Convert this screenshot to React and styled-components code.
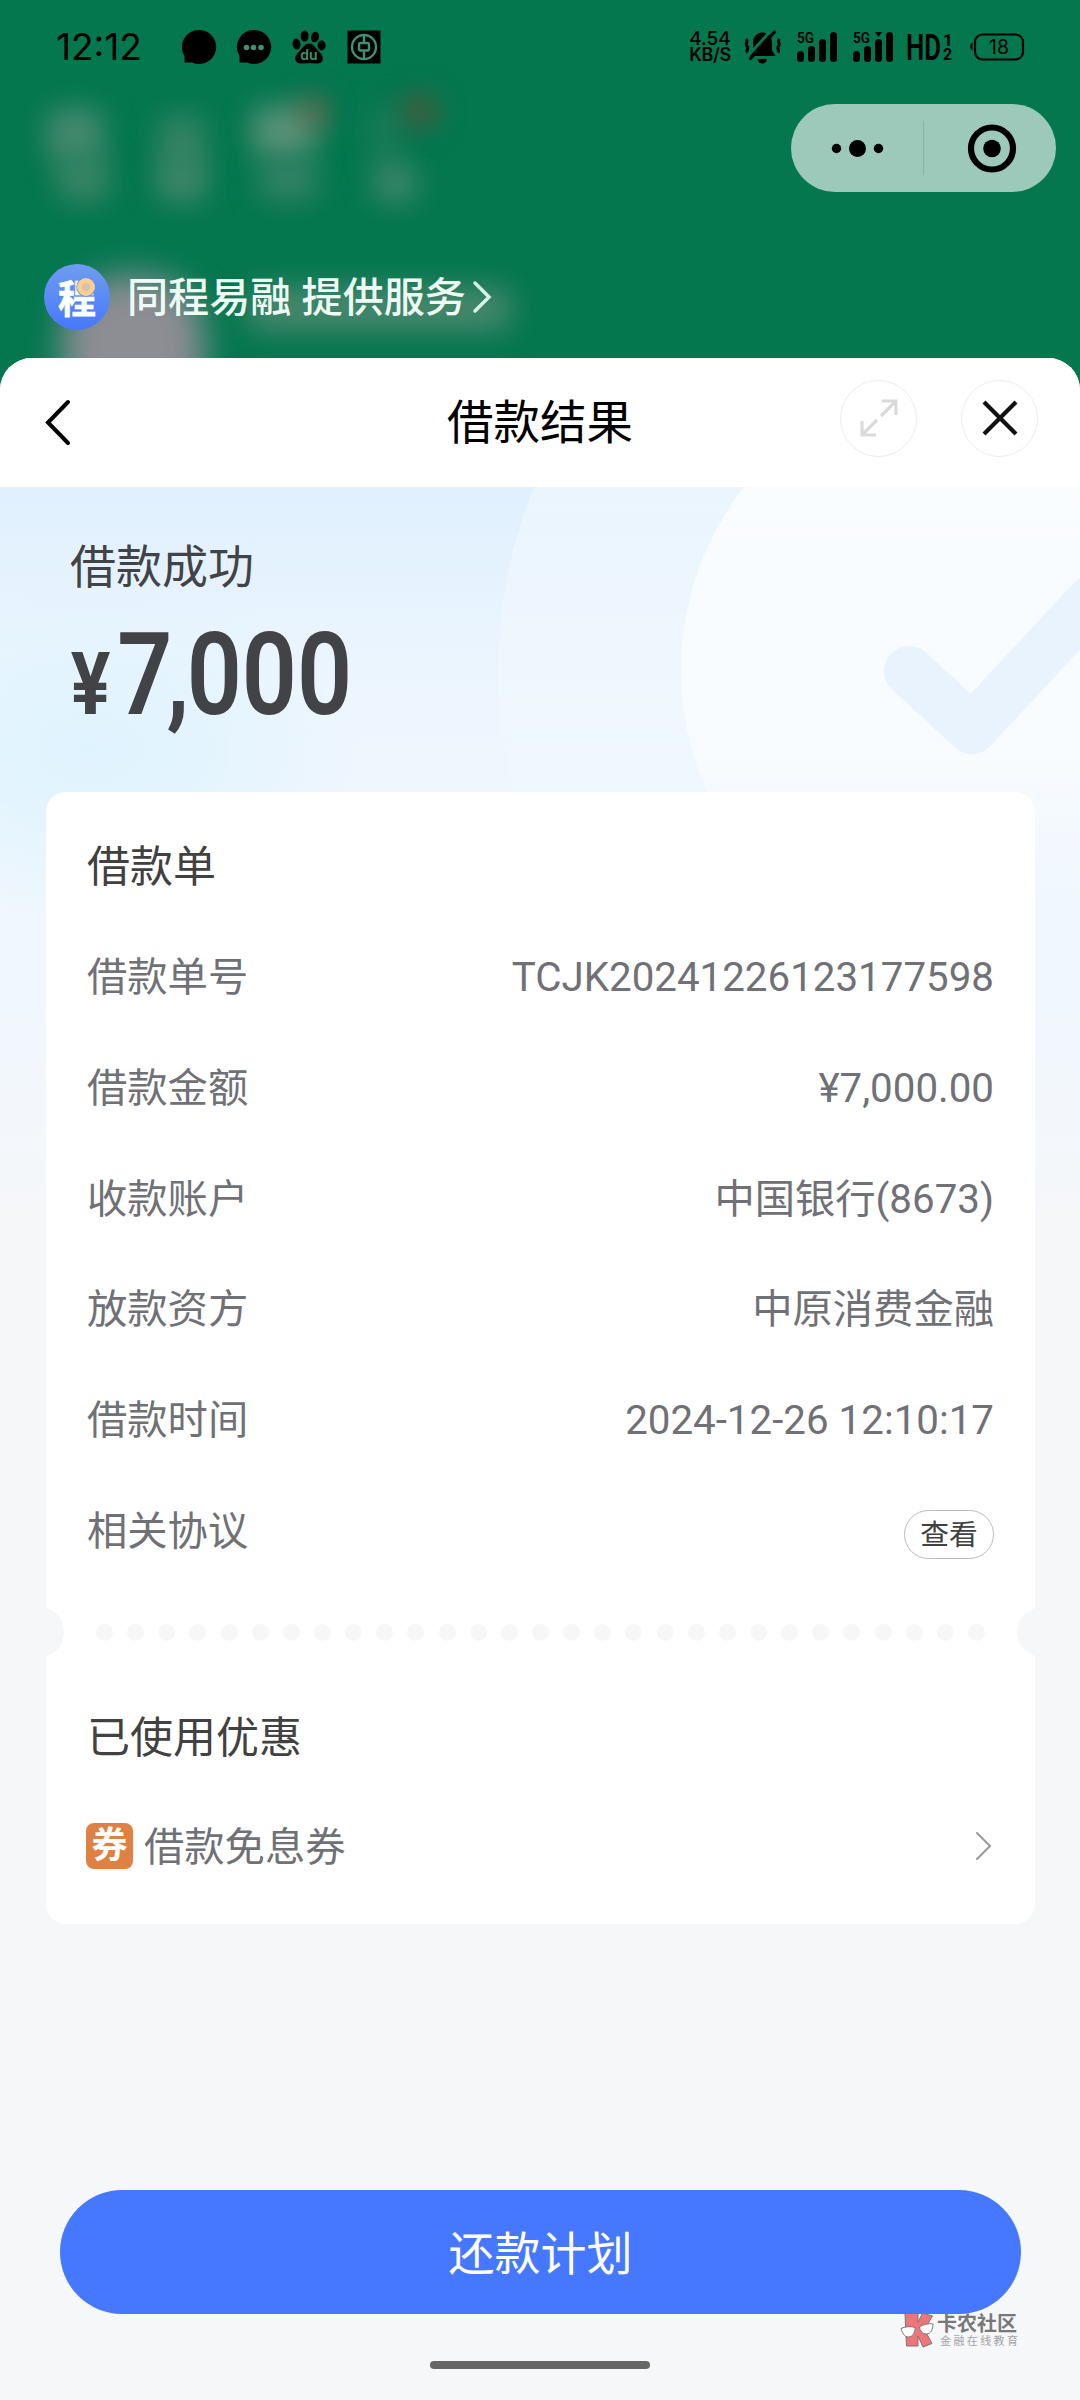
import React from 'react'
import styled, { createGlobalStyle } from 'styled-components'

const GlobalStyle = createGlobalStyle`
    * { box-sizing: border-box; }
    body {
        margin: 0;
        background: #f5f7f9;
        font-family: Roboto, "Noto Sans CJK SC", sans-serif;
    }
    svg {
        flex-shrink: 0;
        overflow: visible;
    }
`

const green = '#04774f'
const pageGrey = '#f5f7f9'

const Screen = styled.div`
    position: relative;
    display: flex;
    flex-direction: column;
    width: 1080px;
    height: 2400px;
    overflow: hidden;
    background: ${green};
`

const Smudge = styled.div`
    position: absolute;
    left: ${({ $x }) => $x}px;
    top: ${({ $y }) => $y}px;
    width: ${({ $w }) => $w}px;
    height: ${({ $h }) => $h}px;
    border-radius: ${({ $r }) => $r || 16}px;
    background: ${({ $color }) => $color};
    filter: blur(${({ $blur }) => $blur || 14}px);
`

const StatusBar = styled.div`
    position: relative;
    display: flex;
    justify-content: space-between;
    height: 92px;
    padding: 0 55px 0 56px;
`

const StatusGroup = styled.div`
    display: flex;
    align-items: center;
    height: 93px;
    gap: ${({ $gap }) => $gap || 0}px;
`

const Clock = styled.div`
    width: 105px;
    font-family: Inter, sans-serif;
    font-size: 37px;
    line-height: 40px;
    white-space: nowrap;
`

const Speed = styled.div`
    width: 42px;
    margin-right: -3px;
    font-family: Inter, sans-serif;
    font-size: 19px;
    font-weight: 500;
    line-height: 16px;
    text-align: center;
    white-space: nowrap;
`

const SpeedUnit = styled.div`
    font-size: 18px;
    font-weight: 600;
    letter-spacing: -0.4px;
`

const CapsuleRow = styled.div`
    position: relative;
    display: flex;
    justify-content: flex-end;
    padding: 12px 24px 0 0;
`

const Capsule = styled.div`
    display: flex;
    align-items: center;
    width: 265px;
    height: 88px;
    border-radius: 44px;
    background: #9dc9ba;
`

const Provider = styled.div`
    position: relative;
    display: flex;
    align-items: center;
    height: 66px;
    margin: 72px 0 28px 44px;
`

const ProviderName = styled.div`
    margin: 1px 7px 0 17px;
    color: #eefaf4;
    font-size: 41.1px;
    font-weight: 500;
    line-height: 60px;
    white-space: nowrap;
`

const Sheet = styled.div`
    position: relative;
    display: flex;
    flex: 1;
    flex-direction: column;
    border-radius: 32px 32px 0 0;
    overflow: hidden;
    background: ${pageGrey};
`

const SheetHeader = styled.div`
    display: grid;
    grid-template-columns: 1fr auto 1fr;
    align-items: center;
    height: 129px;
    padding: 0 42px 0 43px;
    background: #fff;
`

const Title = styled.div`
    margin-right: 1px;
    color: #000;
    font-size: 46.5px;
    line-height: 64px;
`

const HeaderActions = styled.div`
    display: flex;
    justify-content: flex-end;
    gap: 44px;
    padding-bottom: 9px;
`

const RoundButton = styled.div`
    display: flex;
    align-items: center;
    justify-content: center;
    width: 77px;
    height: 77px;
    border: 1px solid #ececec;
    border-radius: 50%;
`

const Body = styled.div`
    position: relative;
    display: flex;
    flex: 1;
    flex-direction: column;
`

const Backdrop = styled.svg`
    position: absolute;
    left: 0;
    top: 0;
    overflow: hidden;
`

const Hero = styled.div`
    position: relative;
    height: 305px;
    padding: 46px 0 0 70px;
    color: #414347;
`

const HeroLabel = styled.div`
    font-size: 46px;
    line-height: 68px;
`

const Amount = styled.div`
    display: flex;
    align-items: baseline;
    margin-top: 18px;
    font-size: 115px;
    font-weight: 600;
    line-height: 112px;
    transform: scaleX(0.84);
    transform-origin: left;
`

const Currency = styled.span`
    margin: 0 8px 0 1px;
    font-size: 88px;
    font-weight: 700;
`

const Comma = styled.span`
    margin: 0 -3px 0 -7px;
`

const Card = styled.div`
    position: relative;
    width: 989px;
    height: 1132px;
    margin-left: 46px;
    padding: 43px 41px 0 41px;
    border-radius: 20px;
    background: #fff;
`

const SectionTitle = styled.div`
    color: #414141;
    font-size: 43px;
    line-height: 64px;
`

const Rows = styled.div`
    display: flex;
    flex-direction: column;
    padding-top: 24px;
`

const Row = styled.div`
    display: flex;
    align-items: center;
    justify-content: space-between;
    height: 110.7px;
    color: #707176;
    font-size: 40.3px;
    line-height: 60px;
`

const ViewButton = styled.div`
    width: 90px;
    height: 49px;
    margin-top: 5px;
    border: 1px solid #bbb;
    border-radius: 25px;
    color: #414141;
    font-size: 28.8px;
    line-height: 49px;
    text-align: center;
`

// runs edge to edge over the card padding so the notches can bite into it
const Perforation = styled.div`
    display: flex;
    align-items: center;
    justify-content: space-between;
    height: 50px;
    margin: 20px -73px 0 -73px;
`

const Notch = styled.div`
    width: 50px;
    height: 50px;
    border-radius: 50%;
    background: ${pageGrey};
`

const Dots = styled.div`
    display: flex;
    justify-content: space-between;
    width: 889px;
`

const Dot = styled.div`
    width: 17px;
    height: 17px;
    border-radius: 50%;
    background: #f7f7f7;
`

const CouponSection = styled.div`
    padding-top: 49px;
`

const CouponRow = styled(Row)`
    height: 60px;
    margin-top: 48px;
    padding-right: 2px;

    > svg { margin-bottom: 4px; }
`

const CouponName = styled.div`
    display: flex;
    align-items: center;
    gap: 11px;
`

const CouponBadge = styled.div`
    width: 47px;
    height: 46px;
    margin: 0 0 4px -1px;
    border-radius: 8px;
    background: #df8143;
    color: #fff;
    font-size: 36px;
    font-weight: 700;
    line-height: 46px;
    text-align: center;
`

const PlanButton = styled.div`
    width: 961px;
    height: 124px;
    margin: 266px auto 0 60px;
    border-radius: 62px;
    background: #4678ff;
    color: #fff;
    font-size: 46px;
    line-height: 128px;
    text-align: center;
`

const HomeBar = styled.div`
    width: 220px;
    height: 8px;
    margin: 47px auto 0;
    border-radius: 4px;
    background: #666;
`

const Watermark = styled.div`
    position: absolute;
    left: 900px;
    top: 2312px;
    display: flex;
    gap: 3px;
`

const WatermarkText = styled.div`
    display: flex;
    flex-direction: column;
    padding-top: 1px;
    white-space: nowrap;
`

const WatermarkName = styled.div`
    color: #77787a;
    font-size: 20px;
    font-weight: 700;
    line-height: 22px;
`

const WatermarkSlogan = styled.div`
    padding-left: 3px;
    color: #a3a4a6;
    font-size: 11px;
    letter-spacing: 2.4px;
    line-height: 14px;
`

const BubbleIcon = ({ dots }) => (
    <svg width="34" height="34" viewBox="0 0 34 34">
        <path d="M17 0a17 17 0 1 1-7 32.4H2.5V26A17 17 0 0 1 17 0z" />
        {dots && [9.5, 16.5, 24].map(x => <circle key={x} cx={x} cy="17.5" r="2.8" fill="#3f9170" />)}
    </svg>
)

const PawIcon = () => (
    <svg width="34" height="34" viewBox="0 0 34 34">
        <ellipse cx="4.5" cy="14" rx="4" ry="5.6" transform="rotate(-8 4.5 14)" />
        <ellipse cx="12.6" cy="6" rx="4" ry="5.6" />
        <ellipse cx="23" cy="7" rx="4" ry="5.4" transform="rotate(12 23 7)" />
        <ellipse cx="29.6" cy="15.5" rx="4" ry="5" />
        <path d="M17 13.5c4 0 6 3.5 8.5 6.5 3 3.2 6 5.5 5.3 9.5-.7 3.5-4 4.3-7 4-4-.4-9.5-.4-13.5 0-3.5.3-6.5-.8-7-4-.6-4 2.5-6.5 5.200-9.500C11.200 17 13 13.500 17 13.500z" />
        <text x="17" y="29.5" fill="#3f9170" fontSize="14" fontWeight="600" fontFamily="Inter" textAnchor="middle">du</text>
    </svg>
)

const BankIcon = () => (
    <svg width="34" height="34" viewBox="0 0 34 34" fill="none" stroke="#3f9170">
        <rect width="33" height="33" x="0.5" y="0.5" fill="#000" stroke="none" />
        <circle cx="17" cy="17" r="12" strokeWidth="2.4" />
        <rect x="12" y="13" width="10" height="7.5" rx="1.5" strokeWidth="2.4" />
        <path d="M17 5v7M17 21.5v7.5" strokeWidth="2.4" />
    </svg>
)

const MutedBell = () => (
    <svg width="40" height="36" viewBox="0 0 40 36">
        <path d="M19.5 3.5c6 0 9.5 4.5 9.5 10v7c0 2 2 3 3.500 6.500H6.500C8 23.500 10 22.500 10 20.500v-7c0-5.500 3.500-10 9.500-10z" />
        <path d="M14.500 30h9.500c-.5 3-2.300 4.500-4.700 4.500s-4.300-1.500-4.800-4.500z" />
        <path d="M4 28L29 0.500" stroke={green} strokeWidth="3" />
        <path d="M7.500 29.500L31.500 3" stroke="#000" strokeWidth="3.200" strokeLinecap="round" />
        <path d="M3 10c3 3-1.500 4 1 7 2.500 2.500-1.500 4 .5 6.500M36.500 10c-3 3 1.500 4-1 7-2.500 2.500 1.500 4-.5 6.500" fill="none" stroke="#000" strokeWidth="3" />
    </svg>
)

const SignalIcon = ({ arrow }) => (
    <svg width="41" height="32" viewBox="0 0 41 32">
        <text x="0" y="12" fontSize="15.5" fontFamily="Roboto" fontWeight="600" textLength="17" lengthAdjust="spacingAndGlyphs">5G</text>
        <rect x="0" y="20" width="7" height="11" rx="3.5" />
        <rect x="11" y="15" width="7" height="16" rx="3.5" />
        <rect x="22" y="8" width="7" height="23" rx="3.5" />
        <rect x="33" y="1" width="7" height="30" rx="3.5" />
        {arrow && <path d="M22 1h7l-3.5 5z" />}
    </svg>
)

const HdIcon = () => (
    <svg width="46" height="30" viewBox="0 0 46 30" fontFamily="Roboto">
        <text x="-2" y="28" fontSize="37" fontWeight="600" textLength="35" lengthAdjust="spacingAndGlyphs">HD</text>
        <text x="35" y="13.5" fontSize="17" fontWeight="700">1</text>
        <text x="35" y="27.5" fontSize="16" fontWeight="700">2</text>
    </svg>
)

const BatteryIcon = () => (
    <svg width="56" height="30" viewBox="0 0 56 30">
        <path d="M3.5 10.5v8c-3-1-3-7 0-8z" />
        <rect x="6" y="2.5" width="48" height="25" rx="7.5" fill="none" stroke="#000" strokeWidth="2.2" />
        <text x="30" y="21.8" fontSize="19.5" fontFamily="Inter" textAnchor="middle">18</text>
    </svg>
)

const CapsuleIcons = () => (
    <svg width="265" height="88" viewBox="0 0 265 88">
        <circle cx="45.5" cy="44.5" r="4.7" />
        <circle cx="66.5" cy="44.5" r="8.5" />
        <circle cx="87.5" cy="44.5" r="4.7" />
        <path d="M132.5 17v54" stroke="#83b3a2" />
        <circle cx="201" cy="44.5" r="21" fill="none" stroke="#000" strokeWidth="6.2" />
        <circle cx="201" cy="44.5" r="8.8" />
    </svg>
)

const ProviderLogo = () => (
    <svg width="66" height="66" viewBox="0 0 66 66">
        <defs>
            <linearGradient id="logo" x1="0" y1="0" x2="0" y2="1">
                <stop offset="0" stopColor="#6f9df0" />
                <stop offset="1" stopColor="#4678fb" />
            </linearGradient>
        </defs>
        <circle cx="33" cy="33" r="33" fill="url(#logo)" />
        <text x="14" y="48.5" fontSize="39" fontWeight="700" fill="#fff" stroke="#fff" strokeWidth="0.6" fontFamily="Noto Sans CJK SC" textLength="38" lengthAdjust="spacingAndGlyphs">程</text>
        <circle cx="42" cy="23" r="9.8" fill="#628ff5" />
        <circle cx="42" cy="23" r="6.5" fill="#d9bfae" stroke="#fbcf8c" strokeWidth="5" />
    </svg>
)

const Chevron = ({ w, h, color, stroke, left }) => (
    <svg width={w} height={h} viewBox={`0 0 ${w} ${h}`} fill="none" stroke={color} strokeWidth={stroke} strokeLinecap="round">
        <path d={left ? `M${w - 3} 3L5 ${h / 2}L${w - 3} ${h - 3}` : `M2 2L${w - 2} ${h / 2}L2 ${h - 2}`} />
    </svg>
)

const ExpandIcon = () => (
    <svg width="38" height="38" viewBox="0 0 38 38" fill="none" stroke="#dadada" strokeWidth="3.2">
        <path d="M22 2h14v14M35.5 2.5L21 17M2 22v14h14M2.5 35.5L17 21" />
    </svg>
)

const CloseIcon = () => (
    <svg width="36" height="36" viewBox="0 0 36 36" stroke="#111" strokeWidth="4.2">
        <path d="M2 2l32 32M34 2L2 34" />
    </svg>
)

const HeroBackdrop = () => (
    <Backdrop width="1080" height="860" viewBox="0 487 1080 860">
        <defs>
            <linearGradient id="sky" x1="0" y1="0" x2="0" y2="1">
                <stop offset="0" stopColor="#e0f0fe" />
                <stop offset="0.25" stopColor="#edf6fe" />
                <stop offset="0.6" stopColor="#f1f7fe" />
                <stop offset="0.85" stopColor={pageGrey} />
            </linearGradient>
            <radialGradient id="cyan">
                <stop offset="0" stopColor="#dff3fe" />
                <stop offset="0.5" stopColor="#e1f4fe" stopOpacity="0.7" />
                <stop offset="1" stopColor="#e4f4fe" stopOpacity="0" />
            </radialGradient>
            <linearGradient id="disc" gradientUnits="userSpaceOnUse" x1="0" y1="487" x2="0" y2="900">
                <stop offset="0" stopColor="#fff" stopOpacity="0.35" />
                <stop offset="1" stopColor="#fff" stopOpacity="0" />
            </linearGradient>
            <linearGradient id="innerDisc" gradientUnits="userSpaceOnUse" x1="0" y1="487" x2="0" y2="920">
                <stop offset="0" stopColor="#fff" stopOpacity="0.75" />
                <stop offset="0.6" stopColor="#fff" stopOpacity="0.55" />
                <stop offset="1" stopColor="#fff" stopOpacity="0" />
            </linearGradient>
        </defs>
        <rect y="487" width="1080" height="860" fill="url(#sky)" />
        <ellipse cx="90" cy="750" rx="270" ry="170" fill="url(#cyan)" />
        <circle cx="978" cy="670" r="480" fill="url(#disc)" />
        <circle cx="978" cy="670" r="297" fill="url(#innerDisc)" />
        <path d="M909 671L972 729L1092 600" fill="none" stroke="#e9f3fe" strokeWidth="50" strokeLinecap="round" strokeLinejoin="round" />
    </Backdrop>
)

const WatermarkLogo = () => (
    <svg width="34" height="36" viewBox="0 0 34 36" stroke="#77787a" strokeWidth="1">
        <path d="M5 1.5h13v9L22.5 1l10 3-8 13.5 7.5 14-9 3.5-5-11v10H6.5z" fill="#f0757b" />
        <path d="M1 16.5c3-2 11-2.5 14-1 .5 5-2.5 9.5-6.500 9.500-4 0-6-3.500-7.500-8.500zM19.500 15c3-2.500 10-4 13.500-3 0 5-2 10-6.500 10-4 0-6.500-3-7-7z" fill="#fff" />
    </svg>
)

const loan = [
    ['借款单号', 'TCJK20241226123177598'],
    ['借款金额', '¥7,000.00'],
    ['收款账户', '中国银行(8673)'],
    ['放款资方', '中原消费金融'],
    ['借款时间', '2024-12-26 12:10:17'],
]

const BlurredBackground = () => (
    <>
        <Smudge $x={46} $y={108} $w={58} $h={54} $color="#47896f" />
        <Smudge $x={56} $y={155} $w={54} $h={46} $color="#3a8565" />
        <Smudge $x={158} $y={115} $w={48} $h={58} $color="#368364" />
        <Smudge $x={156} $y={160} $w={52} $h={42} $color="#40866a" />
        <Smudge $x={252} $y={106} $w={64} $h={52} $color="#5a9278" />
        <Smudge $x={302} $y={98} $w={24} $h={28} $color="#80604f" />
        <Smudge $x={258} $y={160} $w={60} $h={40} $color="#348365" />
        <Smudge $x={372} $y={105} $w={26} $h={60} $color="#1f7c5b" />
        <Smudge $x={404} $y={95} $w={32} $h={32} $color="#5b5239" />
        <Smudge $x={372} $y={163} $w={46} $h={40} $color="#3d866a" />
        <Smudge $x={62} $y={276} $w={142} $h={150} $r={60} $blur={17} $color="#8d8d94" />
        <Smudge $x={246} $y={288} $w={266} $h={42} $color="#4b886e" $blur={15} />
    </>
)

export default () => (
    <Screen>
        <GlobalStyle />
        <BlurredBackground />
        <StatusBar>
            <StatusGroup $gap={21}>
                <Clock>12:12</Clock>
                <BubbleIcon />
                <BubbleIcon dots />
                <PawIcon />
                <BankIcon />
            </StatusGroup>
            <StatusGroup $gap={14.6}>
                <Speed>
                    4.54
                    <SpeedUnit>KB/S</SpeedUnit>
                </Speed>
                <MutedBell />
                <SignalIcon />
                <SignalIcon arrow />
                <HdIcon />
                <BatteryIcon />
            </StatusGroup>
        </StatusBar>
        <CapsuleRow>
            <Capsule><CapsuleIcons /></Capsule>
        </CapsuleRow>
        <Provider>
            <ProviderLogo />
            <ProviderName>同程易融 提供服务</ProviderName>
            <Chevron w={18} h={32} color="#d5f3e6" stroke={3.5} />
        </Provider>
        <Sheet>
            <SheetHeader>
                <Chevron w={28} h={47} color="#000" stroke={4} left />
                <Title>借款结果</Title>
                <HeaderActions>
                    <RoundButton><ExpandIcon /></RoundButton>
                    <RoundButton><CloseIcon /></RoundButton>
                </HeaderActions>
            </SheetHeader>
            <Body>
                <HeroBackdrop />
                <Hero>
                    <HeroLabel>借款成功</HeroLabel>
                    <Amount><Currency>¥</Currency>7<Comma>,</Comma>000</Amount>
                </Hero>
                <Card>
                    <SectionTitle>借款单</SectionTitle>
                    <Rows>
                        {loan.map(([label, value]) => (
                            <Row key={label}>
                                <span>{label}</span>
                                <span>{value}</span>
                            </Row>
                        ))}
                        <Row>
                            <span>相关协议</span>
                            <ViewButton>查看</ViewButton>
                        </Row>
                    </Rows>
                    <Perforation>
                        <Notch />
                        <Dots>{Array.from({ length: 29 }, (_, idx) => <Dot key={idx} />)}</Dots>
                        <Notch />
                    </Perforation>
                    <CouponSection>
                        <SectionTitle>已使用优惠</SectionTitle>
                        <CouponRow>
                            <CouponName>
                                <CouponBadge>券</CouponBadge>
                                <span>借款免息券</span>
                            </CouponName>
                            <Chevron w={17} h={30} color="#999" stroke={2} />
                        </CouponRow>
                    </CouponSection>
                </Card>
                <PlanButton>还款计划</PlanButton>
                <HomeBar />
            </Body>
        </Sheet>
        <Watermark>
            <WatermarkLogo />
            <WatermarkText>
                <WatermarkName>卡农社区</WatermarkName>
                <WatermarkSlogan>金融在线教育</WatermarkSlogan>
            </WatermarkText>
        </Watermark>
    </Screen>
)
